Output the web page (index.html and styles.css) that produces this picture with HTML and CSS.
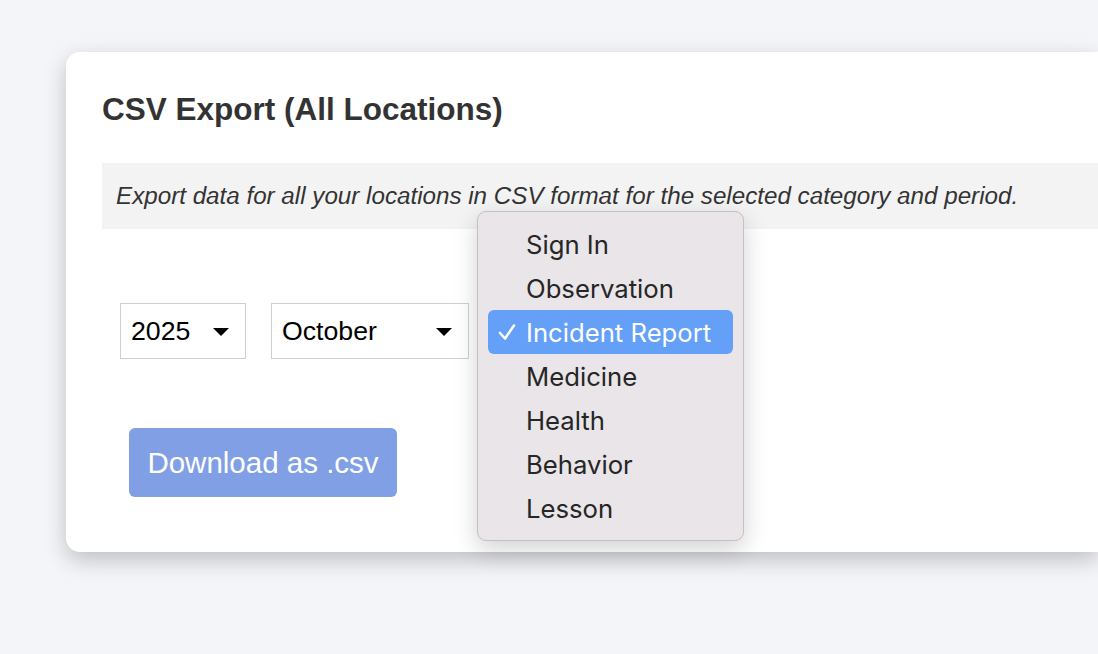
FILE: index.html
```html
<!DOCTYPE html>
<html lang="en">
<head>
<meta charset="utf-8">
<title>CSV Export</title>
<link rel="stylesheet" href="styles.css">
</head>
<body>
<div class="page">
  <section class="card">
    <h2 class="title">CSV Export (All Locations)</h2>
    <div class="info">Export data for all your locations in CSV format for the selected category and period.</div>
    <div class="controls">
      <div class="select select-year"><span class="select-value">2025</span><span class="caret"></span></div>
      <div class="select select-month"><span class="select-value">October</span><span class="caret"></span></div>
      <div class="select-wrap">
        <div class="select select-category"><span class="caret"></span></div>
        <ul class="menu">
          <li class="menu-item">Sign In</li>
          <li class="menu-item">Observation</li>
          <li class="menu-item is-selected"><svg class="check" width="18" height="18" viewBox="0 0 18 18"><polyline points="2,10 7,15.5 16,2.5" fill="none" stroke="#fff" stroke-width="2.6" stroke-linecap="round" stroke-linejoin="round"/></svg>Incident Report</li>
          <li class="menu-item">Medicine</li>
          <li class="menu-item">Health</li>
          <li class="menu-item">Behavior</li>
          <li class="menu-item">Lesson</li>
        </ul>
      </div>
    </div>
    <div class="actions">
      <button class="btn-download" type="button">Download as .csv</button>
    </div>
  </section>
</div>
</body>
</html>
```

FILE: styles.css
```css
html, body {
  margin: 0;
  padding: 0;
}
body {
  background: #f4f5f9;
  font-family: "Liberation Sans", Arial, sans-serif;
  color: #333;
  overflow: hidden;
  width: 1098px;
  height: 654px;
}
.page {
  padding: 52px 0 0 66px;
}
.card {
  background: #fff;
  width: 1032px;
  border-radius: 14px 0 0 14px;
  box-shadow: 0 8px 22px rgba(0, 0, 0, 0.22);
  padding: 39px 0 55px 36px;
  box-sizing: border-box;
}
.title {
  margin: 0;
  font-size: 31.5px;
  line-height: 36px;
  font-weight: bold;
  color: #333;
}
.info {
  margin-top: 36px;
  background: #f3f3f3;
  height: 66px;
  box-sizing: border-box;
  padding: 0 14px;
  display: flex;
  align-items: center;
  font-style: italic;
  font-size: 24.2px;
  color: #333;
}
.controls {
  margin-top: 74px;
  margin-left: 18px;
  display: flex;
  gap: 25px;
}
.select {
  height: 56px;
  box-sizing: border-box;
  border: 1px solid #cfcfcf;
  background: #fff;
  display: flex;
  align-items: center;
  justify-content: space-between;
  padding: 0 16px 0 10px;
  font-size: 26.7px;
  color: #000;
}
.select-year { width: 126px; }
.select-month { width: 198px; }
.select-category { width: 230px; justify-content: flex-end; }
.caret {
  width: 0;
  height: 0;
  border-left: 8px solid transparent;
  border-right: 8px solid transparent;
  border-top: 8px solid #000;
  margin-top: 1px;
}
.select-wrap {
  position: relative;
}
.menu {
  position: absolute;
  left: -17px;
  top: -92px;
  width: 267px;
  margin: 0;
  padding: 10px 10px;
  box-sizing: border-box;
  list-style: none;
  background: #e9e5e8;
  border: 1px solid #c4c0c3;
  border-radius: 9px;
  box-shadow: 0 8px 24px rgba(0, 0, 0, 0.18);
  font-family: Inter, "Noto Sans", sans-serif;
  font-size: 25.7px;
  color: #262626;
  z-index: 5;
}
.menu-item {
  height: 44px;
  display: flex;
  align-items: center;
  padding-left: 38px;
  border-radius: 6px;
  position: relative;
}
.menu-item.is-selected {
  background: #64a0f7;
  color: #fff;
}
.check {
  position: absolute;
  left: 10px;
  top: 13px;
}
.actions {
  margin-top: 69px;
  margin-left: 27px;
}
.btn-download {
  width: 268px;
  height: 69px;
  border: none;
  border-radius: 6px;
  background: #809fe5;
  color: #fff;
  font-family: "Liberation Sans", Arial, sans-serif;
  font-size: 29.5px;
  padding: 0;
  cursor: pointer;
}
```
